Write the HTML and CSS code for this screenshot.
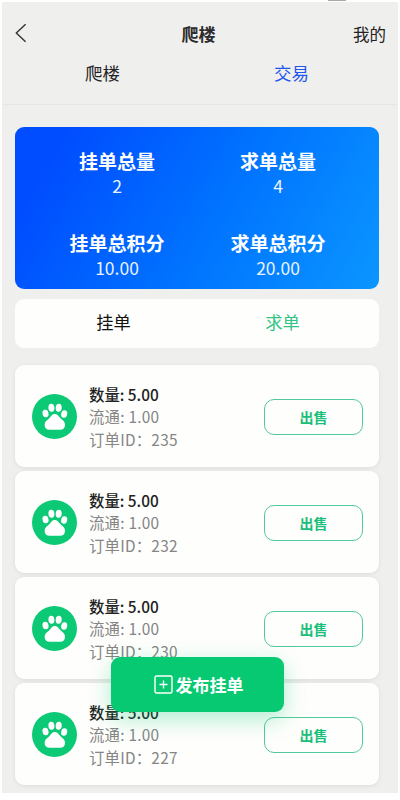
FILE: index.html
```html
<!DOCTYPE html>
<html lang="zh-CN">
<head>
<meta charset="utf-8">
<title>爬楼</title>
<link rel="stylesheet" href="styles.css">
</head>
<body>
<svg class="defs" aria-hidden="true">
  <symbol id="paw" viewBox="0 0 45 45">
    <ellipse cx="13.500" cy="19.500" rx="3" ry="3.800" transform="rotate(-12 13.500 19.500)"/>
    <ellipse cx="19.400" cy="13.800" rx="3" ry="4" transform="rotate(-5 19.400 13.800)"/>
    <ellipse cx="26.700" cy="13.800" rx="3" ry="4" transform="rotate(5 26.700 13.800)"/>
    <ellipse cx="32.200" cy="20" rx="3" ry="3.800" transform="rotate(12 32.200 20)"/>
    <path d="M22.800 20c3 0 4.200 2.800 6.200 4.800 2 1.800 4 3 4 6 0 3.200-1.800 5-4.800 5H17.600c-3 0-5-1.800-5-5 0-3 2.200-4.200 4.200-6 2-2 3-4.800 6-4.800z"/>
  </symbol>
</svg>
<div class="screen">
  <header class="navbar">
    <svg class="back" viewBox="0 0 12 20"><path d="M10.600 1.200 1.300 10l9.300 8.800"/></svg>
    <h1 class="title">爬楼</h1>
    <span class="mine">我的</span>
  </header>
  <nav class="tabs">
    <span class="tab">爬楼</span>
    <span class="tab active">交易</span>
  </nav>
  <main class="content">
    <section class="summary">
      <div class="stat"><b>挂单总量</b><span>2</span></div>
      <div class="stat"><b>求单总量</b><span>4</span></div>
      <div class="stat"><b>挂单总积分</b><span>10.00</span></div>
      <div class="stat"><b>求单总积分</b><span>20.00</span></div>
    </section>
    <div class="switch">
      <span>挂单</span>
      <span class="selected">求单</span>
    </div>
    <section class="orders">
      <article class="order">
        <svg class="avatar"><use href="#paw"/></svg>
        <div class="info"><p class="qty">数量: 5.00</p><p>流通: 1.00</p><p>订单ID：235</p></div>
        <button class="sell">出售</button>
      </article>
      <article class="order">
        <svg class="avatar"><use href="#paw"/></svg>
        <div class="info"><p class="qty">数量: 5.00</p><p>流通: 1.00</p><p>订单ID：232</p></div>
        <button class="sell">出售</button>
      </article>
      <article class="order">
        <svg class="avatar"><use href="#paw"/></svg>
        <div class="info"><p class="qty">数量: 5.00</p><p>流通: 1.00</p><p>订单ID：230</p></div>
        <button class="sell">出售</button>
      </article>
      <article class="order">
        <svg class="avatar"><use href="#paw"/></svg>
        <div class="info"><p class="qty">数量: 5.00</p><p>流通: 1.00</p><p>订单ID：227</p></div>
        <button class="sell">出售</button>
      </article>
    </section>
  </main>
  <button class="publish">
    <svg class="plus" viewBox="0 0 19 19"><rect x="1" y="1" width="17" height="17" rx="1.500"/><path d="M9.500 5.500v8M5.500 9.500h8"/></svg>
    <span>发布挂单</span>
  </button>
</div>
</body>
</html>
```
FILE: styles.css
```css
* {
  box-sizing: border-box;
}

body {
  margin: 0;
  height: 800px;
  padding: 2px 2px 7px;
  overflow: hidden;
  background: #fff;
  color: #222;
  font-family: "Noto Sans CJK SC", sans-serif;
}

h1,
p {
  margin: 0;
}

button {
  padding: 0;
  font-family: inherit;
}

.defs {
  position: absolute;
  width: 0;
  height: 0;
}

.screen {
  position: relative;
  height: 791px;
  background: #efefed;
}

.screen::before {
  content: "";
  position: absolute;
  top: -2px;
  left: 326px;
  width: 18px;
  height: 1px;
  background: #aaa;
}

.navbar {
  display: grid;
  grid-template-columns: 60px 1fr 60px;
  align-items: center;
  height: 58px;
  padding: 6px 12px 0 13px;
}

.back {
  width: 12px;
  height: 20px;
  margin-top: -2px;
  fill: none;
  stroke: #333;
  stroke-width: 1.4;
}

.title {
  padding-right: 4px;
  font-size: 17px;
  line-height: 24px;
  font-weight: 700;
  text-align: center;
  color: #2c2c2c;
}

.mine {
  font-size: 16.5px;
  line-height: 24px;
  text-align: right;
}

.tabs {
  display: grid;
  grid-template-columns: 1fr 1fr;
  height: 45px;
  padding-right: 8px;
  border-bottom: 1px solid #e6e6e4;
}

.tab {
  padding: 0 0 0 7px;
  font-size: 17.5px;
  line-height: 26px;
  text-align: center;
}

.tab.active {
  padding: 0 3px 0 0;
  color: #1f56ee;
}

.content {
  width: 377px;
  padding: 22px 0 0 13px;
}

.summary {
  display: grid;
  grid-template-columns: 161px 161px;
  grid-template-rows: 81.5px 81px;
  justify-content: center;
  height: 162px;
  padding-left: 1px;
  border-radius: 9px;
  background: linear-gradient(120deg, #004dff 12%, #0073ff 55%, #0b96ff 100%);
  color: #fff;
}

.stat {
  display: flex;
  flex-direction: column;
  align-items: center;
  padding-top: 21px;
}

.stat b {
  font-size: 19px;
  line-height: 26px;
  font-weight: 700;
}

.stat span {
  font-size: 17.5px;
  line-height: 23px;
  color: #e8f3ff;
}

.switch {
  display: grid;
  grid-template-columns: 169px 169px;
  height: 49px;
  margin-top: 10px;
  padding-left: 14px;
  border-radius: 9px;
  background: #fefefc;
  font-size: 17.3px;
  line-height: 45px;
  text-align: center;
  color: #111;
}

.switch .selected {
  color: #32c485;
}

.orders {
  display: flex;
  flex-direction: column;
  gap: 4px;
  margin-top: 17px;
}

.order {
  display: flex;
  align-items: center;
  height: 102px;
  padding: 0 17px;
  border-radius: 9px;
  background: #fefefc;
  box-shadow: 0 1px 4px rgba(0, 0, 0, .08);
}

.avatar {
  width: 45px;
  height: 45px;
  border-radius: 50%;
  background: #0bc974;
  fill: #fff;
}

.info {
  flex: 1;
  padding: 1px 0 0 12px;
}

.info p {
  font-size: 15.4px;
  line-height: 22.500px;
  letter-spacing: .22px;
  color: #858585;
}

.info .qty {
  font-weight: 500;
  letter-spacing: 0;
  color: #222;
}

.sell {
  width: 99px;
  height: 36px;
  margin: 2px -1px 0 0;
  border: 1.5px solid #52c99a;
  border-radius: 10px;
  background: transparent;
  font-size: 14px;
  line-height: 34px;
  font-weight: 700;
  color: #1bbf7a;
}

.publish {
  position: absolute;
  top: 655px;
  left: 109px;
  display: flex;
  align-items: center;
  justify-content: center;
  gap: 3px;
  width: 173px;
  height: 55px;
  padding-left: 2px;
  border: 0;
  border-radius: 9px;
  background: #07c972;
  box-shadow: 0 7px 22px rgba(7, 201, 114, .32);
  color: #fff;
  font-size: 17px;
  line-height: 26px;
  font-weight: 700;
}

.plus {
  width: 19px;
  height: 19px;
  fill: none;
  stroke: #fff;
  stroke-width: 1.4;
}
```
